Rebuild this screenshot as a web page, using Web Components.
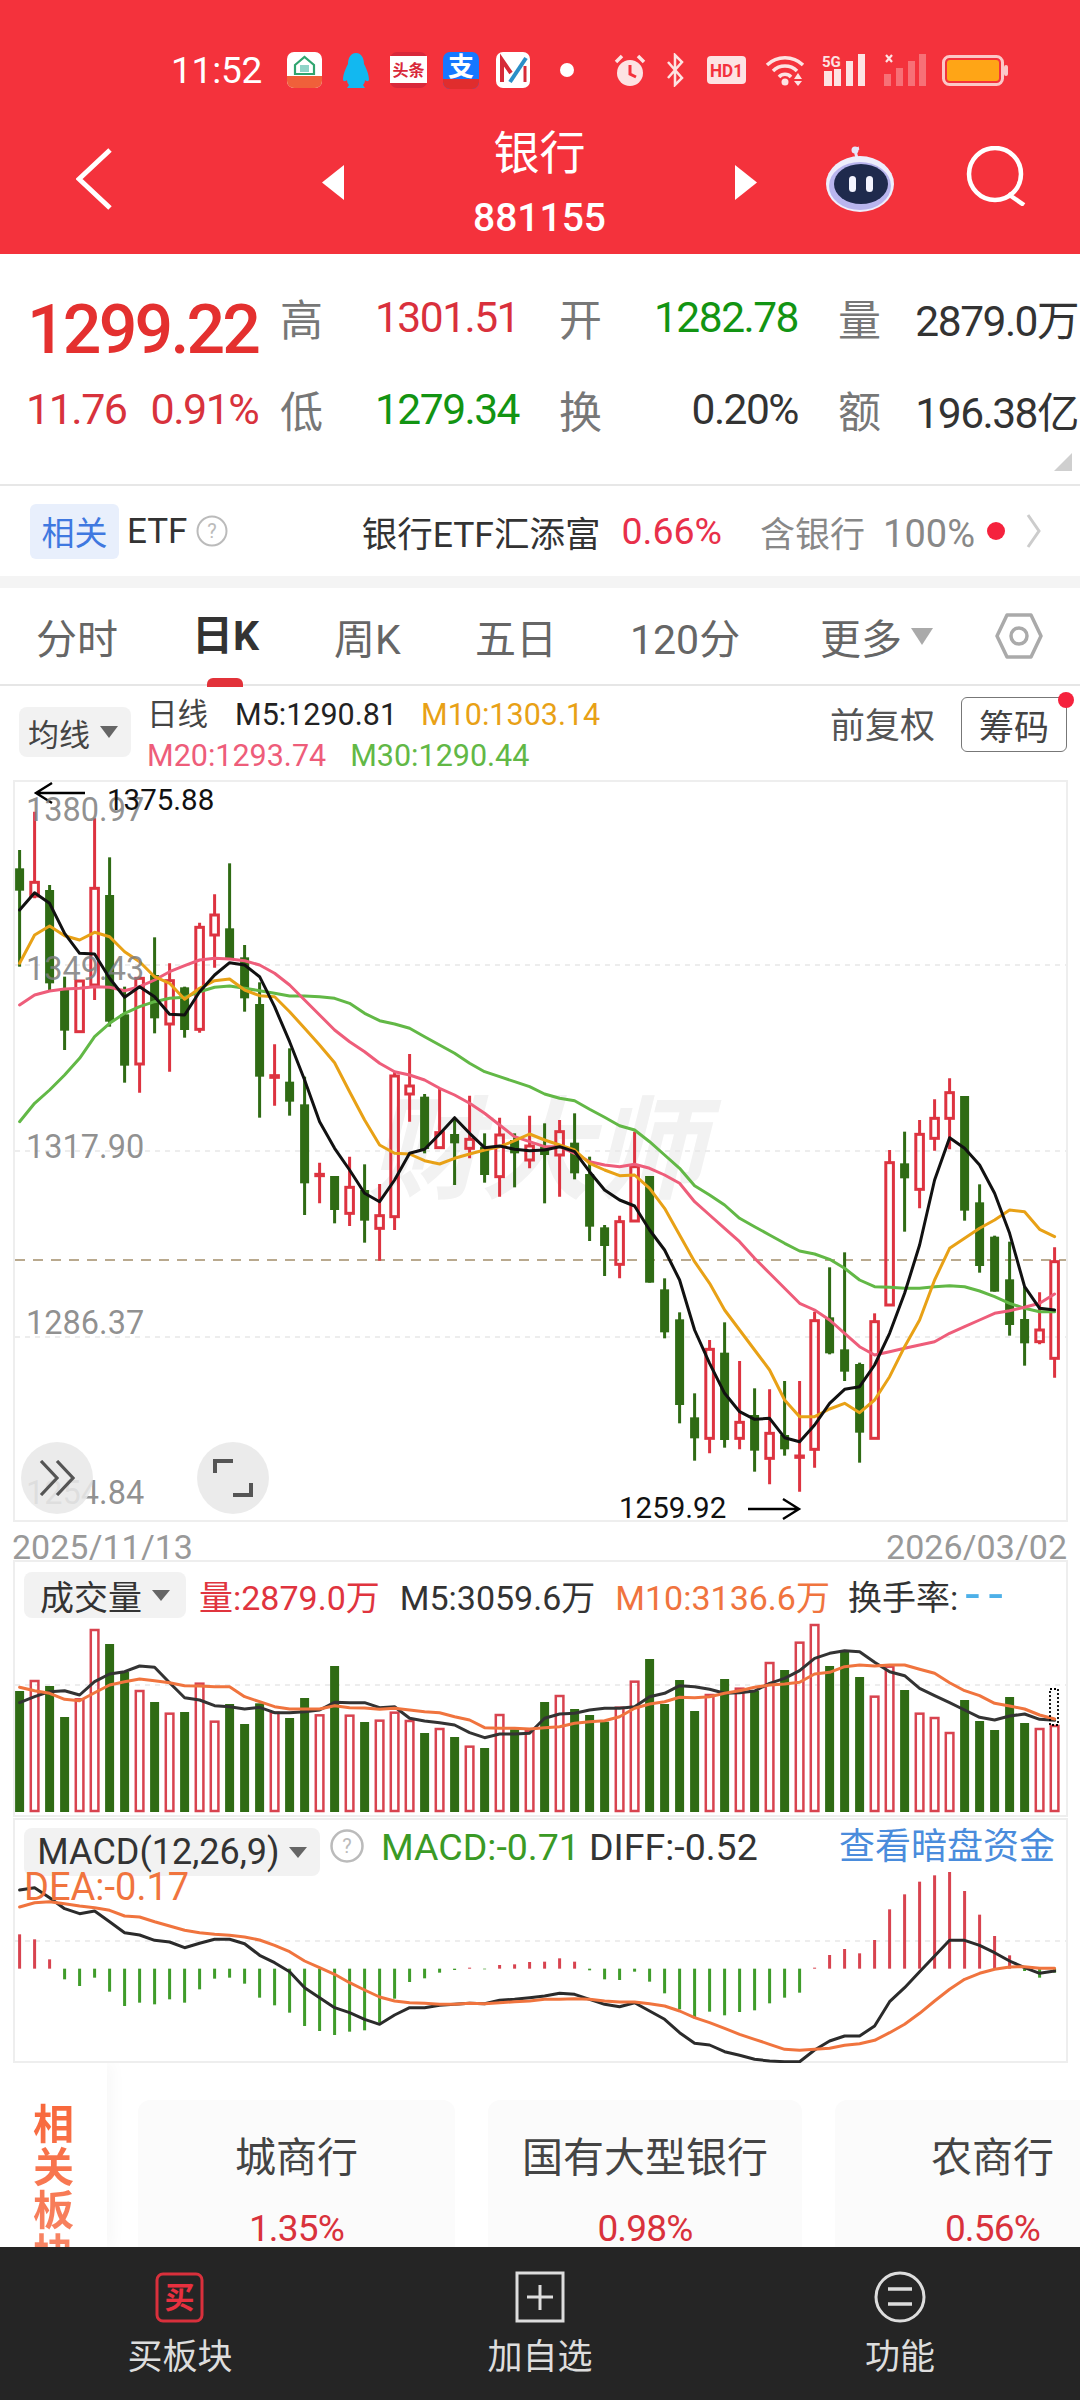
<!DOCTYPE html>
<html lang="zh">
<head>
<meta charset="utf-8">
<title>银行 881155</title>
<style>
html,body{margin:0;padding:0;width:1080px;height:2400px;overflow:hidden;background:#fff;}
body{display:flex;flex-direction:column;font-family:Roboto,"Noto Sans CJK SC",sans-serif;color:#333;}
app-header,quote-panel,etf-row,period-tabs,ma-legend,kline-chart,date-axis,volume-chart,macd-chart,bottom-bar{flex:none;}
related-blocks{flex:1;min-height:0;}
</style>
</head>
<body>
<app-header></app-header>
<quote-panel></quote-panel>
<etf-row></etf-row>
<period-tabs></period-tabs>
<ma-legend></ma-legend>
<kline-chart></kline-chart>
<date-axis></date-axis>
<volume-chart></volume-chart>
<macd-chart></macd-chart>
<related-blocks>
  <block-card style="width:317px"><span slot="name">城商行</span><span slot="pct">1.35%</span></block-card>
  <block-card style="width:314px"><span slot="name">国有大型银行</span><span slot="pct">0.98%</span></block-card>
  <block-card style="width:315px"><span slot="name">农商行</span><span slot="pct">0.56%</span></block-card>
</related-blocks>
<bottom-bar>
  <bar-item>
    <svg slot="icon" width="50" height="52" viewBox="0 0 50 52"><rect x="2" y="3" width="45" height="47" rx="6" fill="none" stroke="#d9303c" stroke-width="3"/><text x="24.500" y="37" text-anchor="middle" font-size="30" font-weight="700" fill="#e8303f" font-family="'Noto Sans CJK SC',sans-serif">买</text></svg>
    买板块
  </bar-item>
  <bar-item>
    <svg slot="icon" width="50" height="52" viewBox="0 0 50 52"><rect x="2" y="2" width="46" height="48" fill="none" stroke="#ddd" stroke-width="3"/><path d="M25 14v25M12 26h26" stroke="#ddd" stroke-width="3" fill="none"/></svg>
    加自选
  </bar-item>
  <bar-item>
    <svg slot="icon" width="52" height="52" viewBox="0 0 52 52"><circle cx="26" cy="26" r="24" fill="none" stroke="#ddd" stroke-width="3"/><path d="M14 18h24M14 33h24" stroke="#ddd" stroke-width="3.500" fill="none"/></svg>
    功能
  </bar-item>
</bottom-bar>

<script>
// small helper, every element gets an open shadow root cloned from a template
function comp(name, html, setup) {
  const t = document.createElement("template");
  t.innerHTML = html;
  customElements.define(name, class extends HTMLElement {
    constructor() {
      super();
      this.attachShadow({ mode: "open" });
      this.shadowRoot.appendChild(t.content.cloneNode(true));
      if (setup) setup(this.shadowRoot);
    }
  });
}

// chart data was read from the picture, values are crop units (1 px = 3 units in y)
const candles = `g 240 295 362 590|r 125 337 378 385|g 345 360 640 660|g 620 655 782 840|r 630 633 785 785|r 145 355 645 690|g 262 375 755 770|g 650 733 887 938|r 620 625 882 968|g 502 615 745 790|r 580 632 762 905|g 650 652 780 803|r 458 472 778 788|r 373 435 495 593|g 280 475 565 565|g 525 562 685 725|g 637 702 920 1043|r 823 917 922 1007|g 835 935 995 1037|g 920 1003 1240 1335|r 1178 1213 1217 1300|g 1218 1218 1320 1360|r 1160 1252 1330 1368|g 1183 1260 1352 1418|r 1242 1337 1375 1472|r 905 918 1340 1380|r 852 948 972 1055|g 972 980 1137 1150|r 957 1088 1133 1135|g 1045 1092 1120 1245|r 977 1108 1135 1165|g 1090 1130 1215 1238|r 1043 1095 1220 1280|g 1090 1110 1150 1252|r 1037 1128 1170 1195|g 1060 1130 1155 1300|r 1050 1085 1155 1280|g 1030 1118 1210 1228|g 1160 1212 1370 1413|g 1365 1372 1428 1518|r 1337 1355 1483 1525|r 1085 1190 1353 1353|g 1218 1218 1538 1538|g 1525 1558 1687 1705|g 1627 1648 1905 1960|g 1870 1942 2005 2072|r 1710 1738 2005 2050|g 1657 1748 2010 2033|r 1773 1957 2005 2038|g 1855 1935 2042 2105|r 1858 1990 2065 2143|g 1833 1995 2038 2057|r 1833 2058 2062 2165|r 1625 1652 2038 2093|g 1492 1642 1750 1753|g 1447 1738 1805 1833|g 1778 1782 1988 2078|r 1630 1655 2005 2005|r 1140 1178 1605 1605|g 1085 1180 1225 1385|r 1050 1093 1258 1315|r 988 1045 1105 1142|r 925 968 1045 1138|g 978 978 1322 1352|g 1243 1297 1488 1508|g 1397 1400 1565 1565|g 1415 1528 1665 1697|g 1550 1647 1720 1787|r 1567 1680 1715 1723|r 1432 1475 1765 1823`
  .split("|").map(s => { const p = s.split(" "); return { c: p[0], v: p.slice(1).map(Number) }; });

const ma5 = [420,368,400,490,550,552,625,682,650,680,733,735,665,615,578,585,620,710,815,930,1055,1135,1200,1270,1295,1230,1150,1138,1092,1043,1090,1133,1128,1138,1142,1140,1130,1145,1205,1260,1290,1308,1380,1440,1530,1680,1780,1870,1925,1948,1945,2003,2015,1965,1900,1858,1850,1785,1690,1570,1425,1230,1103,1135,1185,1270,1390,1550,1615,1620];
const ma10 = [580,495,468,497,510,487,500,545,575,620,640,688,655,632,627,660,677,680,725,775,825,878,965,1050,1125,1150,1152,1172,1182,1165,1152,1140,1130,1112,1092,1110,1125,1140,1180,1200,1217,1215,1255,1315,1395,1475,1540,1620,1680,1740,1800,1890,1940,1940,1917,1900,1928,1890,1820,1730,1650,1530,1435,1405,1375,1350,1320,1325,1378,1400];
const ma20 = [705,675,663,657,655,650,652,662,650,630,605,587,570,565,567,572,585,610,645,690,735,780,815,845,880,905,915,930,955,975,1000,1030,1065,1100,1115,1130,1130,1150,1175,1185,1190,1183,1195,1215,1240,1295,1335,1375,1415,1465,1510,1555,1600,1620,1650,1690,1730,1755,1745,1735,1725,1715,1690,1670,1650,1630,1622,1612,1600,1572];
const ma30 = [1055,1000,960,915,865,800,760,730,710,695,685,682,665,652,648,655,662,670,678,678,680,685,700,730,752,762,775,800,825,850,880,905,920,935,950,972,985,992,1018,1042,1067,1080,1115,1155,1195,1247,1275,1305,1345,1370,1395,1420,1443,1452,1468,1495,1530,1550,1552,1555,1555,1550,1547,1550,1563,1580,1600,1615,1625,1625];

const vol = [483,450,468,561,505,297,342,425,480,516,548,546,458,572,522,582,520,545,564,504,553,408,554,576,569,545,570,609,594,621,647,654,552,598,600,516,495,537,555,575,530,452,387,522,450,543,492,447,473,482,396,420,335,282,408,360,441,497,407,480,548,561,606,510,573,600,501,579,594,585];
const volM5 = [518,500,485,482,495,455,432,425,408,412,458,503,510,527,530,537,532,548,548,545,540,517,518,518,533,530,565,573,578,585,608,623,612,612,610,565,552,550,540,535,535,530,500,490,467,470,478,490,488,483,460,445,422,385,370,362,365,397,425,437,475,497,518,540,562,570,558,552,568,571];
const volM10 = [472,482,490,508,512,488,465,455,447,452,458,467,468,470,470,500,515,530,537,537,537,527,533,534,538,535,540,545,548,560,570,593,595,595,597,593,590,580,575,572,560,535,522,515,502,503,500,490,482,472,465,462,457,432,427,410,405,408,405,405,418,430,458,482,497,520,528,537,555,567];

const macdBars = [370,385,445,505,525,500,542,585,575,580,565,575,535,503,500,518,560,583,605,645,660,672,662,658,635,563,513,502,485,477,470,475,462,460,453,452,442,452,478,505,507,482,512,547,595,622,602,613,603,598,577,560,545,470,432,414,427,387,295,250,212,193,183,240,311,375,433,480,500,485];
const diff = [237,230,260,293,308,300,332,365,372,388,393,410,397,385,385,398,433,455,482,530,560,590,605,625,640,612,590,590,583,580,577,578,568,565,560,555,547,550,565,580,587,575,600,625,665,697,702,722,733,745,750,752,752,717,690,675,675,645,572,530,482,435,388,388,403,425,450,470,487,480];
const dea = [288,275,272,278,285,290,298,315,318,332,345,358,365,370,373,378,387,403,422,450,470,490,515,537,558,570,575,577,580,580,577,578,575,572,570,565,565,563,565,570,573,573,578,585,600,620,635,652,670,685,700,715,718,715,712,703,698,688,665,640,607,570,535,505,487,475,468,467,472,472];

const X = i => 19.6 + 15 * i;
const line = (vals, y, color, w) =>
  `<polyline fill="none" stroke="${color}" stroke-width="${w}" stroke-linejoin="round" stroke-linecap="round" points="${vals.map((v, i) => X(i).toFixed(1) + "," + y(v).toFixed(1)).join(" ")}"/>`;
const dash = (y, color, d) => `<line x1="15" x2="1066" y1="${y}" y2="${y}" stroke="${color || "#e8e8e8"}" stroke-width="${color ? 2 : 1.5}" stroke-dasharray="${d || "5 5"}"/>`;

const chartCss = `
:host{display:block;position:relative;width:1080px;box-sizing:border-box;padding:0 12px 0 13px;overflow:hidden;font-family:Roboto,"Noto Sans CJK SC",sans-serif;}
.box{height:100%;box-sizing:border-box;border:2px solid #eee;border-bottom-width:2px;}
svg.plot{position:absolute;left:0;top:0;}
.chip{background:#f2f2f2;border-radius:8px;color:#333;display:flex;align-items:center;justify-content:center;box-sizing:border-box;}
.tri{width:0;height:0;border-left:9px solid transparent;border-right:9px solid transparent;border-top:11px solid #666;}
`;

comp("app-header", `
<style>
:host{display:block;height:254px;background:#f4323c;color:#fff;}
.status{height:120px;box-sizing:border-box;padding:20px 0 0 171px;display:flex;align-items:center;}
.status svg{display:block;flex:none;}
.time{font-size:37px;width:116px;letter-spacing:-.2px;}
.nav{display:grid;grid-template-columns:322px 22px 1fr 22px 323px;height:134px;}
.back{padding:28px 0 0 76px;}
.t1{margin-top:45px;}
.title{text-align:center;font-family:Roboto,"Noto Sans CJK SC",sans-serif;}
.name{font-size:46px;line-height:56px;margin-top:5px;}
.code{font-size:39px;line-height:44px;margin-top:15px;font-weight:500;}
.tools{display:flex;padding:26px 0 0 68px;align-items:flex-start;}
</style>
<div class="status">
  <div class="time">11:52</div>
  <svg width="35" height="36" viewBox="0 0 35 36" style="margin-right:20px"><rect width="35" height="36" rx="7" fill="#fff"/><path d="M0 24h35v5a7 7 0 0 1-7 7H7a7 7 0 0 1-7-7z" fill="#f0603a"/><path d="M8 13 17.500 5 27 13v9H8z" fill="none" stroke="#2fa56f" stroke-width="2.200"/><path d="M13 13h9v7h-9z" fill="#8fd4c8"/></svg>
  <svg width="28" height="35" viewBox="0 0 28 35" style="margin-right:20px"><path d="M14 0C20 0 22 6 22 11c2 4 5 10 5 16-1 2-3 1-4 0 0 2-1 4-2 5l2 3H5l2-3c-1-1-2-3-2-5-1 1-3 2-4 0 0-6 3-12 5-16C6 6 8 0 14 0z" fill="#12b8f0"/></svg>
  <svg width="37" height="36" viewBox="0 0 37 36" style="margin-right:16px"><rect width="37" height="36" rx="7" fill="#d8283a"/><rect y="4" width="37" height="27" fill="#fff"/><text x="18.500" y="24" text-anchor="middle" font-size="16" font-weight="700" fill="#d8283a" font-family="'Noto Sans CJK SC',sans-serif">头条</text></svg>
  <svg width="36" height="37" viewBox="0 0 36 37" style="margin-right:17px"><rect width="36" height="37" rx="7" fill="#1677ff"/><path d="M0 27h36v3a7 7 0 0 1-7 7H7a7 7 0 0 1-7-7z" fill="#e02d2d"/><text x="18" y="24" text-anchor="middle" font-size="26" font-weight="700" fill="#fff" font-family="'Noto Sans CJK SC',sans-serif">支</text></svg>
  <svg width="34" height="36" viewBox="0 0 34 36" style="margin-right:30px"><rect width="34" height="36" rx="7" fill="#fff"/><path d="M6 30V8l9 13" fill="none" stroke="#d62b38" stroke-width="4"/><path d="M14 30 30 6" stroke="#2a8fc8" stroke-width="4"/><path d="M29 14v16" stroke="#d62b38" stroke-width="3"/></svg>
  <svg width="14" height="14" viewBox="0 0 14 14" style="margin-right:40px"><circle cx="7" cy="7" r="7" fill="#fff"/></svg>
  <svg width="32" height="34" viewBox="0 0 32 34" style="margin-right:19px"><circle cx="16" cy="20" r="13" fill="#fde3e3"/><path d="M16 12v9l6 3" fill="none" stroke="#f4323c" stroke-width="3"/><path d="M2 9 8 3M30 9 24 3" stroke="#fde3e3" stroke-width="3.500"/></svg>
  <svg width="20" height="34" viewBox="0 0 20 34" style="margin-right:22px"><path d="M3 9l14 16-7 7V2l7 7L3 25" fill="none" stroke="#fde3e3" stroke-width="2.500"/></svg>
  <svg width="39" height="28" viewBox="0 0 39 28" style="margin-right:19px"><rect width="39" height="28" rx="4" fill="#fde3e3"/><text x="19.500" y="21" text-anchor="middle" font-size="19" font-weight="700" fill="#f4323c" font-family="Roboto,sans-serif" textLength="33" lengthAdjust="spacingAndGlyphs">HD1</text></svg>
  <svg width="41" height="32" viewBox="0 0 41 32" style="margin-right:16px"><g fill="none" stroke="#fde3e3" stroke-width="3.500"><path d="M2 11a26 26 0 0 1 36 0"/><path d="M8 17a17 17 0 0 1 24 0"/><path d="M14 23a8 8 0 0 1 12 0"/></g><circle cx="20" cy="28" r="3.500" fill="#fde3e3"/><path d="M33 19l4 6h-8zM29 27h8l-4 5z" fill="#fde3e3"/></svg>
  <svg width="44" height="32" viewBox="0 0 44 32" style="margin-right:18px"><text x="0" y="13" font-size="15" font-weight="700" fill="#fde3e3" font-family="Roboto,sans-serif">5G</text><g fill="#fde3e3"><rect x="2" y="17" width="8" height="15"/><rect x="12" y="15" width="7" height="17"/><rect x="24" y="7" width="7" height="25"/><rect x="36" y="0" width="7" height="32"/></g></svg>
  <svg width="42" height="32" viewBox="0 0 42 32" style="margin-right:16px"><path d="M2 1l6 7M8 1 2 8" stroke="#fde3e3" stroke-width="2.200"/><g fill="#fde3e3" opacity=".35"><rect x="0" y="20" width="7" height="12"/><rect x="12" y="14" width="7" height="18"/><rect x="24" y="7" width="7" height="25"/><rect x="35" y="0" width="7" height="32"/></g></svg>
  <svg width="66" height="31" viewBox="0 0 66 31"><rect x="1.500" y="1.500" width="59" height="28" rx="6" fill="none" stroke="#fbc8c8" stroke-width="3"/><rect x="5" y="5" width="52" height="21" rx="3" fill="#ffa516"/><rect x="62" y="10" width="4" height="11" rx="2" fill="#fbc8c8"/></svg>
</div>
<div class="nav">
  <div class="back"><svg width="36" height="62" viewBox="0 0 36 62" style="display:block"><path d="M34 2 3 31l31 29" fill="none" stroke="#fff" stroke-width="5"/></svg></div>
  <div class="t1"><svg width="22" height="35" viewBox="0 0 22 35" style="display:block"><path d="M22 0v35L0 17.500z" fill="#fff"/></svg></div>
  <div class="title"><div class="name">银行</div><div class="code">881155</div></div>
  <div class="t1"><svg width="22" height="35" viewBox="0 0 22 35" style="display:block"><path d="M0 0v35l22-17.500z" fill="#fff"/></svg></div>
  <div class="tools">
    <svg width="70" height="66" viewBox="0 0 70 66" style="display:block;margin-right:71px"><path d="M32 12C30 6 30 3 34 2" fill="none" stroke="#e6e6fa" stroke-width="3"/><circle cx="30" cy="4" r="3.500" fill="#e6e6fa"/><ellipse cx="35" cy="38" rx="34" ry="28" fill="#eeeefc"/><ellipse cx="35" cy="40" rx="31" ry="24" fill="#b9b5ee"/><ellipse cx="36" cy="38" rx="27" ry="20" fill="#1f2a4d"/><rect x="24" y="30" width="7" height="16" rx="3.500" fill="#f4f4ff"/><rect x="41" y="30" width="7" height="16" rx="3.500" fill="#f4f4ff"/></svg>
    <svg width="62" height="60" viewBox="0 0 62 60" style="display:block"><circle cx="29" cy="28" r="26" fill="none" stroke="#fff" stroke-width="4.500"/><path d="M42 48l16 11" stroke="#fff" stroke-width="4.500"/></svg>
  </div>
</div>
`);

comp("quote-panel", `
<style>
:host{display:block;position:relative;height:232px;box-sizing:border-box;border-bottom:2px solid #e7e7e7;padding:17px 2px 0 26px;font-family:Roboto,"Noto Sans CJK SC",sans-serif;}
.grid{display:grid;grid-template-columns:254px 279px 279px 1fr;grid-auto-rows:92px;}
.cell{display:flex;align-items:center;justify-content:space-between;padding-right:40px;font-size:42.500px;letter-spacing:-1.500px;}
.cell.last{padding-right:0;}
.lb{font-size:43px;letter-spacing:0;color:#777;width:44px;}
.big{font-size:68px;font-weight:500;color:#e4302f;letter-spacing:-2.800px;padding:27px 0 0 1px;line-height:64px;}
.sub{display:flex;gap:24px;align-items:center;font-size:43px;letter-spacing:-1.500px;color:#d8323c;}
.r{color:#d9303c}.g{color:#129412}.d{color:#333}
.corner{position:absolute;right:8px;bottom:13px;width:0;height:0;border-left:18px solid transparent;border-bottom:18px solid #cfcfcf;}
</style>
<div class="grid">
  <div class="big">1299.22</div>
  <div class="cell"><span class="lb">高</span><span class="r">1301.51</span></div>
  <div class="cell"><span class="lb">开</span><span class="g">1282.78</span></div>
  <div class="cell last"><span class="lb">量</span><span class="d">2879.0万</span></div>
  <div class="sub"><span>11.76</span><span>0.91%</span></div>
  <div class="cell"><span class="lb">低</span><span class="g">1279.34</span></div>
  <div class="cell"><span class="lb">换</span><span class="d">0.20%</span></div>
  <div class="cell last"><span class="lb">额</span><span class="d">196.38亿</span></div>
</div>
<div class="corner"></div>
`);

comp("etf-row", `
<style>
:host{display:flex;align-items:center;height:102px;box-sizing:border-box;border-bottom:12px solid #f4f4f4;padding-left:30px;font-family:Roboto,"Noto Sans CJK SC",sans-serif;font-size:35px;color:#333;}
.tag{width:89px;height:55px;border-radius:6px;background:#e8effc;color:#3f78e0;font-size:33px;display:flex;align-items:center;justify-content:center;margin-right:8px;}
.q{margin:0 0 0 9px;}
.name{margin-left:auto;font-size:35.500px;}
.pct{color:#e8304a;margin-left:21px;font-size:37.500px;}
.own{color:#888;margin-left:38px;}
.own span{margin-left:18px;font-size:38px;}
.dot{width:18px;height:18px;border-radius:50%;background:#f5223d;margin-left:12px;}
svg{display:block;flex:none;}
</style>
<div class="tag">相关</div><span>ETF</span>
<svg class="q" width="32" height="32" viewBox="0 0 32 32"><circle cx="16" cy="16" r="14.500" fill="none" stroke="#bbb" stroke-width="2"/><text x="16" y="23" text-anchor="middle" font-size="20" fill="#bbb" font-family="Roboto,sans-serif">?</text></svg>
<span class="name">银行ETF汇添富</span><span class="pct">0.66%</span><span class="own">含银行<span>100%</span></span><div class="dot"></div>
<svg style="margin:0 39px 0 21px" width="15" height="34" viewBox="0 0 15 34"><path d="M2 1l11 16L2 33" fill="none" stroke="#ccc" stroke-width="3"/></svg>
`);

comp("period-tabs", `
<style>
:host{display:grid;grid-template-columns:156px 142px 141px 155px 190px 175px 1fr;align-items:center;height:98px;box-sizing:border-box;border-bottom:2px solid #e6e6e6;padding:0 0 2px 36px;font-family:Roboto,"Noto Sans CJK SC",sans-serif;font-size:41px;color:#666;position:relative;}
.on{color:#333;font-weight:700;position:relative;height:96px;line-height:96px;}
.on::after{content:"";position:absolute;left:15px;bottom:-3px;width:36px;height:9px;background:#e2323a;border-radius:6px 6px 0 0;}
.more{display:flex;align-items:center;gap:9px;}
.more i{width:0;height:0;border-left:11px solid transparent;border-right:11px solid transparent;border-top:17px solid #aaa;}
svg{display:block;}
</style>
<span>分时</span><span class="on">日K</span><span>周K</span><span>五日</span><span>120分</span>
<span class="more">更多<i></i></span>
<svg width="48" height="46" viewBox="0 0 48 46"><path d="M12 2h24l10 21-10 21H12L2 23z" fill="none" stroke="#aaa" stroke-width="3.500" stroke-linejoin="round"/><circle cx="24" cy="23" r="8" fill="none" stroke="#aaa" stroke-width="3.500"/></svg>
`);

comp("ma-legend", `
<style>
:host{display:flex;position:relative;height:94px;box-sizing:border-box;padding:0 13px 0 19px;font-family:Roboto,"Noto Sans CJK SC",sans-serif;font-size:30.500px;color:#222;}
.chip{width:112px;height:50px;margin-top:21px;background:#f2f2f2;border-radius:8px;display:flex;align-items:center;gap:10px;padding-left:9px;box-sizing:border-box;color:#444;font-size:31px;}
.chip i{width:0;height:0;border-left:9px solid transparent;border-right:9px solid transparent;border-top:12px solid #666;}
.vals{margin-left:16px;padding-top:8px;line-height:41px;}
.row{display:flex;gap:24px;white-space:nowrap;}
.row b{font-weight:400;margin-right:3px;color:#444;}
.right{margin-left:auto;display:flex;align-items:flex-start;gap:26px;color:#555;font-size:35px;}
.right span{margin-top:20px;line-height:42px;}
.btn{width:106px;height:55px;margin-top:11px;box-sizing:border-box;border:1.500px solid #777;border-radius:6px;display:flex;align-items:center;justify-content:center;color:#444;position:relative;}
.btn::after{content:"";position:absolute;right:-8px;top:-6px;width:16px;height:16px;border-radius:50%;background:#f5223d;}
.o{color:#e8a116}.p{color:#ee5d7a}.g{color:#62b846}
</style>
<div class="chip">均线<i></i></div>
<div class="vals">
  <div class="row"><b>日线</b><span>M5:1290.81</span><span class="o">M10:1303.14</span></div>
  <div class="row"><span class="p">M20:1293.74</span><span class="g">M30:1290.44</span></div>
</div>
<div class="right"><span>前复权</span><div class="btn">筹码</div></div>
`);

comp("kline-chart", `
<style>
${chartCss}
:host{height:742px;}
.lbl{position:absolute;font-size:32.500px;line-height:40px;left:26px;color:rgba(125,125,125,.85);}
.blk{position:absolute;font-size:29.500px;line-height:36px;color:#111;}
.wm{position:absolute;left:368px;top:312px;font-size:112px;line-height:120px;font-weight:700;font-style:italic;color:#f2f2f2;white-space:nowrap;}
.round{position:absolute;top:662px;width:72px;height:72px;border-radius:50%;background:rgba(232,232,232,.88);display:flex;align-items:center;justify-content:center;}
</style>
<div class="box"></div>
<div class="wm">财大师</div>
<svg class="plot" width="1080" height="742" viewBox="0 780 1080 742"></svg>
<div class="lbl" style="top:10px">1380.97</div>
<div class="lbl" style="top:169px">1349.43</div>
<div class="lbl" style="top:347px">1317.90</div>
<div class="lbl" style="top:523px">1286.37</div>
<div class="lbl" style="top:693px">1254.84</div>
<div class="blk" style="left:107px;top:2px">1375.88</div>
<div class="blk" style="left:619px;top:710px">1259.92</div>
<div class="round" style="left:21px"><svg width="36" height="36" viewBox="0 0 36 36"><path d="M2 1l16 17L2 35M18 1l16 17-16 17" fill="none" stroke="#555" stroke-width="3.200"/></svg></div>
<div class="round" style="left:197px"><svg width="40" height="38" viewBox="0 0 40 38"><path d="M2 14V2h18M38 24v12H20" fill="none" stroke="#555" stroke-width="4"/></svg></div>
`, root => {
  const y = z => 770 + z / 3;
  let s = dash(965) + dash(1151) + dash(1337) + dash(1260, "#b9a98e", "10 8");
  candles.forEach((k, i) => {
    const x = X(i), [a, b, c, d] = k.v.map(y);
    if (k.c === "g") {
      s += `<rect x="${x - 1.5}" y="${a}" width="3" height="${d - a}" fill="#2f6b14"/><rect x="${x - 4.5}" y="${b}" width="9" height="${c - b}" fill="#2f6b14"/>`;
    } else {
      s += `<path d="M${x} ${a}V${b}M${x} ${c}V${d}" stroke="#dd3340" stroke-width="3" fill="none"/><rect x="${x - 3.8}" y="${b}" width="7.600" height="${Math.max(c - b, .1)}" fill="none" stroke="#dd3340" stroke-width="3"/>`;
    }
  });
  s += line(ma30, y, "#62b846", 3) + line(ma20, y, "#ee5d7a", 3) + line(ma10, y, "#e8a116", 3) + line(ma5, y, "#111", 3);
  s += `<path d="M85 793H36M52 783 36 793 52 803" fill="none" stroke="#000" stroke-width="2.400"/><path d="M748 1509H799M783 1499l16 10-16 10" fill="none" stroke="#000" stroke-width="2.400"/>`;
  root.querySelector("svg.plot").innerHTML = s;
});

comp("date-axis", `
<style>
:host{display:flex;justify-content:space-between;height:38px;box-sizing:border-box;padding:6px 13px 0 12px;font-family:Roboto,sans-serif;font-size:34px;line-height:38px;color:#999;overflow:visible;}
</style>
<span>2025/11/13</span><span>2026/03/02</span>
`);

comp("volume-chart", `
<style>
${chartCss}
:host{height:257px;}
.head{position:absolute;left:24px;top:12px;display:flex;align-items:center;height:46px;font-size:34px;white-space:nowrap;color:#333;}
.chip{width:162px;height:46px;gap:10px;margin-right:13px;}
.m{margin-left:20px;}
.r{color:#e0343e}.o{color:#f0743e}.h{display:flex;align-items:center;margin-left:18px;}
.b{color:#4db0e8;font-size:52px;line-height:46px;letter-spacing:9px;margin-left:7px;}
</style>
<div class="box"></div>
<svg class="plot" width="1080" height="257" viewBox="0 1560 1080 257"></svg>
<div class="head"><div class="chip">成交量<span class="tri"></span></div><span class="r">量:2879.0万</span><span class="m">M5:3059.6万</span><span class="m o">M10:3136.6万</span><span class="h">换手率:<span class="b">--</span></span></div>
`, root => {
  const y = z => 1530 + z / 3, base = y(843);
  let s = dash(y(465)) ;
  vol.forEach((v, i) => {
    const x = X(i), t = y(v);
    s += candles[i].c === "g"
      ? `<rect x="${x - 4.5}" y="${t}" width="9" height="${base - t + 1}" fill="#2f6b14"/>`
      : `<rect x="${x - 3.8}" y="${t + 1}" width="7.600" height="${base - t - 1}" fill="none" stroke="#d8434f" stroke-width="2.500"/>`;
  });
  s += line(volM5, y, "#333", 3) + line(volM10, y, "#f0743e", 3);
  s += `<rect x="1050" y="1689" width="8" height="36" fill="none" stroke="#000" stroke-width="1.800" stroke-dasharray="2 2"/>`;
  root.querySelector("svg.plot").innerHTML = s;
});

comp("macd-chart", `
<style>
${chartCss}
:host{height:245px;margin-top:1px;}
.head{position:absolute;left:24px;right:25px;top:10px;display:flex;align-items:flex-start;font-size:37.500px;white-space:nowrap;color:#333;}
.chip{width:296px;height:48px;gap:9px;font-size:36px;margin-right:10px;}
.head svg{margin:1px 17px 0 0;display:block;}
.g{color:#3a9a25;line-height:38px;}
.d{margin-left:9px;line-height:38px;}
.more{margin-left:auto;color:#4a8cdc;line-height:38px;font-size:36px;}
.dea{position:absolute;left:24px;top:49px;font-size:38px;line-height:40px;color:#f0743e;}
</style>
<div class="box"></div>
<svg class="plot" width="1080" height="245" viewBox="0 1817 1080 245"></svg>
<div class="head"><div class="chip">MACD(12,26,9)<span class="tri"></span></div>
<svg width="34" height="34" viewBox="0 0 34 34"><circle cx="17" cy="17" r="15.500" fill="none" stroke="#bbb" stroke-width="2.500"/><text x="17" y="24" text-anchor="middle" font-size="20" fill="#bbb" font-family="Roboto,sans-serif">?</text></svg>
<span class="g">MACD:-0.71</span><span class="d">DIFF:-0.52</span><span class="more">查看暗盘资金</span></div>
<div class="dea">DEA:-0.17</div>
`, root => {
  const y = z => 1810 + z / 3, base = y(473);
  let s = dash(y(390));
  macdBars.forEach((v, i) => {
    const t = y(v);
    s += `<rect x="${X(i) - 1.5}" y="${Math.min(t, base)}" width="3" height="${Math.abs(t - base)}" fill="${v > 473 ? "#3f9c2a" : "#d8434f"}"/>`;
  });
  s += line(diff, y, "#2b2b2b", 3) + line(dea, y, "#f0743e", 3);
  root.querySelector("svg.plot").innerHTML = s;
});

comp("block-card", `
<style>
:host{display:block;flex:none;height:220px;box-sizing:border-box;background:#fbfbfb;border-radius:12px;text-align:center;font-family:Roboto,"Noto Sans CJK SC",sans-serif;}
.n{font-size:41px;line-height:50px;padding-top:33px;color:#444;}
.p{font-size:37px;line-height:36px;padding-top:28px;color:#d9323c;letter-spacing:-.8px;}
</style>
<div class="n"><slot name="name"></slot></div>
<div class="p"><slot name="pct"></slot></div>
`);

comp("related-blocks", `
<style>
:host{display:flex;overflow:hidden;font-family:"Noto Sans CJK SC",sans-serif;}
.side{flex:none;width:107px;box-sizing:border-box;padding:37px 0 0 33px;box-shadow:6px 0 14px rgba(0,0,0,.03);position:relative;}
.side div{font-size:41px;line-height:43px;width:41px;font-weight:700;background:linear-gradient(#f8673a,#f78a6c);-webkit-background-clip:text;background-clip:text;color:transparent;}
.list{display:flex;gap:33px;padding:37px 0 0 31px;}
</style>
<div class="side"><div>相关板块</div></div>
<div class="list"><slot></slot></div>
`);

comp("bar-item", `
<style>
:host{display:flex;flex-direction:column;align-items:center;flex:1;color:#ddd;font-size:35px;line-height:46px;}
.ic{height:53px;margin:24px 0 7px;}
.ic ::slotted(svg){display:block;}
</style>
<div class="ic"><slot name="icon"></slot></div>
<slot></slot>
`);

comp("bottom-bar", `
<style>
:host{display:flex;height:153px;background:#252525;font-family:"Noto Sans CJK SC",sans-serif;}
</style>
<slot></slot>
`);
</script>
</body>
</html>
